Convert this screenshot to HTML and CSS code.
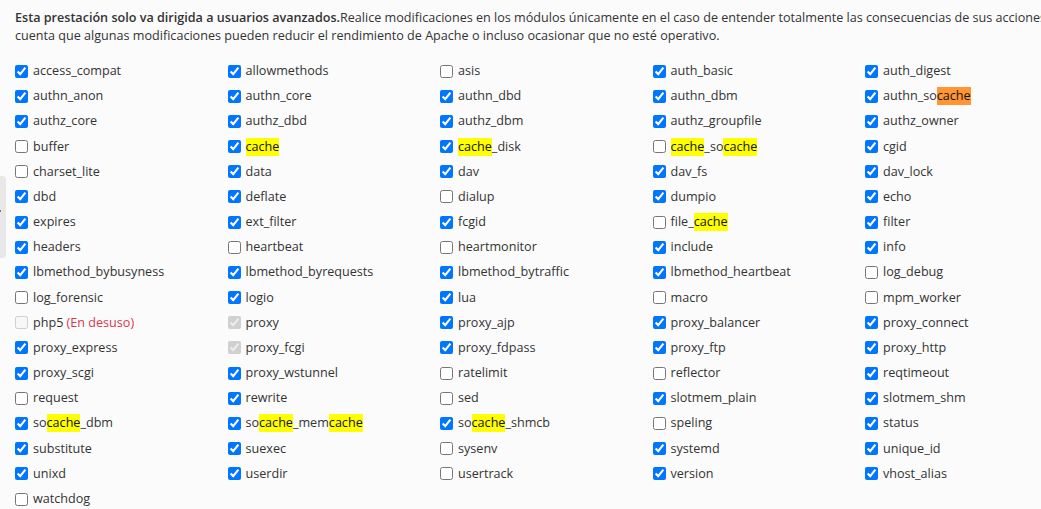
FILE: index.html
```html
<!DOCTYPE html>
<html lang="es">
<head>
<meta charset="utf-8">
<title>Módulos de Apache</title>
<link rel="stylesheet" href="styles.css">
</head>
<body>
<div class="side-tab"><span class="side-dot"></span></div>
<div class="page">
  <p class="notice"><strong>Esta prestación solo va dirigida a usuarios avanzados.</strong>Realice modificaciones en los módulos únicamente en el caso de entender totalmente las consecuencias de sus acciones. Tenga en cuenta que algunas modificaciones pueden reducir el rendimiento de Apache o incluso ocasionar que no esté operativo.</p>
  <div class="modules">
    <label class="mod"><input type="checkbox" checked>access_compat</label>
    <label class="mod"><input type="checkbox" checked>allowmethods</label>
    <label class="mod"><input type="checkbox">asis</label>
    <label class="mod"><input type="checkbox" checked>auth_basic</label>
    <label class="mod"><input type="checkbox" checked>auth_digest</label>

    <label class="mod"><input type="checkbox" checked>authn_anon</label>
    <label class="mod"><input type="checkbox" checked>authn_core</label>
    <label class="mod"><input type="checkbox" checked>authn_dbd</label>
    <label class="mod"><input type="checkbox" checked>authn_dbm</label>
    <label class="mod"><input type="checkbox" checked>authn_so<span class="hl current">cache</span></label>

    <label class="mod"><input type="checkbox" checked>authz_core</label>
    <label class="mod"><input type="checkbox" checked>authz_dbd</label>
    <label class="mod"><input type="checkbox" checked>authz_dbm</label>
    <label class="mod"><input type="checkbox" checked>authz_groupfile</label>
    <label class="mod"><input type="checkbox" checked>authz_owner</label>

    <label class="mod"><input type="checkbox">buffer</label>
    <label class="mod"><input type="checkbox" checked><span class="hl">cache</span></label>
    <label class="mod"><input type="checkbox" checked><span class="hl">cache</span>_disk</label>
    <label class="mod"><input type="checkbox"><span class="hl">cache</span>_so<span class="hl">cache</span></label>
    <label class="mod"><input type="checkbox" checked>cgid</label>

    <label class="mod"><input type="checkbox">charset_lite</label>
    <label class="mod"><input type="checkbox" checked>data</label>
    <label class="mod"><input type="checkbox" checked>dav</label>
    <label class="mod"><input type="checkbox" checked>dav_fs</label>
    <label class="mod"><input type="checkbox" checked>dav_lock</label>

    <label class="mod"><input type="checkbox" checked>dbd</label>
    <label class="mod"><input type="checkbox" checked>deflate</label>
    <label class="mod"><input type="checkbox">dialup</label>
    <label class="mod"><input type="checkbox" checked>dumpio</label>
    <label class="mod"><input type="checkbox" checked>echo</label>

    <label class="mod"><input type="checkbox" checked>expires</label>
    <label class="mod"><input type="checkbox" checked>ext_filter</label>
    <label class="mod"><input type="checkbox" checked>fcgid</label>
    <label class="mod"><input type="checkbox">file_<span class="hl">cache</span></label>
    <label class="mod"><input type="checkbox" checked>filter</label>

    <label class="mod"><input type="checkbox" checked>headers</label>
    <label class="mod"><input type="checkbox">heartbeat</label>
    <label class="mod"><input type="checkbox">heartmonitor</label>
    <label class="mod"><input type="checkbox" checked>include</label>
    <label class="mod"><input type="checkbox" checked>info</label>

    <label class="mod"><input type="checkbox" checked>lbmethod_bybusyness</label>
    <label class="mod"><input type="checkbox" checked>lbmethod_byrequests</label>
    <label class="mod"><input type="checkbox" checked>lbmethod_bytraffic</label>
    <label class="mod"><input type="checkbox" checked>lbmethod_heartbeat</label>
    <label class="mod"><input type="checkbox">log_debug</label>

    <label class="mod"><input type="checkbox">log_forensic</label>
    <label class="mod"><input type="checkbox" checked>logio</label>
    <label class="mod"><input type="checkbox" checked>lua</label>
    <label class="mod"><input type="checkbox">macro</label>
    <label class="mod"><input type="checkbox">mpm_worker</label>

    <label class="mod"><input type="checkbox" disabled>php5&nbsp;<span class="deprecated">(En desuso)</span></label>
    <label class="mod"><input type="checkbox" checked disabled>proxy</label>
    <label class="mod"><input type="checkbox" checked>proxy_ajp</label>
    <label class="mod"><input type="checkbox" checked>proxy_balancer</label>
    <label class="mod"><input type="checkbox" checked>proxy_connect</label>

    <label class="mod"><input type="checkbox" checked>proxy_express</label>
    <label class="mod"><input type="checkbox" checked disabled>proxy_fcgi</label>
    <label class="mod"><input type="checkbox" checked>proxy_fdpass</label>
    <label class="mod"><input type="checkbox" checked>proxy_ftp</label>
    <label class="mod"><input type="checkbox" checked>proxy_http</label>

    <label class="mod"><input type="checkbox" checked>proxy_scgi</label>
    <label class="mod"><input type="checkbox" checked>proxy_wstunnel</label>
    <label class="mod"><input type="checkbox">ratelimit</label>
    <label class="mod"><input type="checkbox">reflector</label>
    <label class="mod"><input type="checkbox" checked>reqtimeout</label>

    <label class="mod"><input type="checkbox">request</label>
    <label class="mod"><input type="checkbox" checked>rewrite</label>
    <label class="mod"><input type="checkbox">sed</label>
    <label class="mod"><input type="checkbox" checked>slotmem_plain</label>
    <label class="mod"><input type="checkbox" checked>slotmem_shm</label>

    <label class="mod"><input type="checkbox" checked>so<span class="hl">cache</span>_dbm</label>
    <label class="mod"><input type="checkbox" checked>so<span class="hl">cache</span>_mem<span class="hl">cache</span></label>
    <label class="mod"><input type="checkbox" checked>so<span class="hl">cache</span>_shmcb</label>
    <label class="mod"><input type="checkbox">speling</label>
    <label class="mod"><input type="checkbox" checked>status</label>

    <label class="mod"><input type="checkbox" checked>substitute</label>
    <label class="mod"><input type="checkbox" checked>suexec</label>
    <label class="mod"><input type="checkbox">sysenv</label>
    <label class="mod"><input type="checkbox" checked>systemd</label>
    <label class="mod"><input type="checkbox" checked>unique_id</label>

    <label class="mod"><input type="checkbox" checked>unixd</label>
    <label class="mod"><input type="checkbox" checked>userdir</label>
    <label class="mod"><input type="checkbox">usertrack</label>
    <label class="mod"><input type="checkbox" checked>version</label>
    <label class="mod"><input type="checkbox" checked>vhost_alias</label>

    <label class="mod"><input type="checkbox">watchdog</label>
  </div>
</div>
</body>
</html>
```

FILE: styles.css
```css
html, body {
  margin: 0;
  padding: 0;
  background: #fbfbfb;
  overflow: hidden;
}

body {
  font-family: "Open Sans", "Liberation Sans", sans-serif;
  font-size: 12.6px;
  color: #333;
  width: 1041px;
  height: 509px;
  position: relative;
}

.page {
  padding: 9px 0 0 15px;
  width: 1120px;
}

.notice {
  margin: 0;
  line-height: 18px;
  width: 1110px;
}

.notice strong {
  font-weight: 600;
}

.modules {
  display: grid;
  grid-template-columns: repeat(5, 212.5px);
  grid-auto-rows: 25.18px;
  margin-top: 13.5px;
}

.mod {
  display: flex;
  align-items: center;
  white-space: nowrap;
  line-height: 18px;
}

.mod input {
  margin: 0 5px 0 0;
  width: 13px;
  height: 13px;
  flex: none;
}

.hl {
  background: #ffff00;
  color: #111;
}

.hl.current {
  background: #ff9632;
}

.deprecated {
  color: #d9364f;
}

.side-tab {
  position: absolute;
  left: 0;
  top: 176px;
  width: 6px;
  height: 82px;
  background: #e8e8e8;
  border-radius: 0 4px 4px 0;
}

.side-dot {
  position: absolute;
  left: 0;
  top: 34px;
  width: 1px;
  height: 2px;
  background: #777;
}
```
